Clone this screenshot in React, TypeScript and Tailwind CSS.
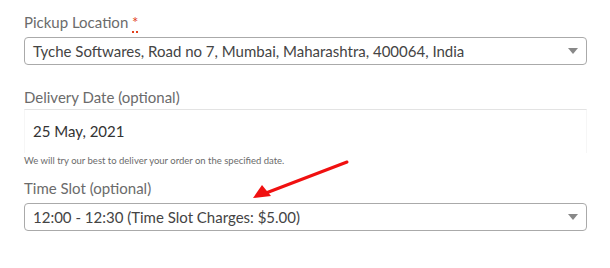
import React from "react";

const Caret = () => (
  <svg width="10" height="6" viewBox="0 0 10 6" className="absolute right-[8px] top-1/2 -translate-y-1/2">
    <path d="M0 0 L10 0 L5 6 Z" fill="#888" />
  </svg>
);

export default function App() {
  return (
    <div
      className="relative w-[610px] h-[268px] bg-white"
      style={{ fontFamily: "Lato, 'Liberation Sans', sans-serif" }}
    >
      <div className="flex flex-col pl-[24px] pt-[10px] w-[587px]">
        <label className="text-[15px] leading-[24px] text-[#6b6b6b]">
          Pickup Location{" "}
          <abbr className="text-[#e2401c] no-underline border-b-2 border-dotted border-[#e2401c]" title="required">*</abbr>
        </label>
        <div className="relative mt-[3px] h-[28px] border border-[#aaaaaa] rounded-[4px] flex items-center pl-[8px] text-[15px] text-[#444]">
          Tyche Softwares, Road no 7, Mumbai, Maharashtra, 400064, India
          <Caret />
        </div>

        <label className="mt-[20px] text-[15px] leading-[24px] text-[#6b6b6b]">Delivery Date (optional)</label>
        <div className="h-[44px] border-t border-[#e3e3e3] border-x border-x-[#f6f6f6] flex items-center pl-[8px] text-[15px] text-[#333]">
          25 May, 2021
        </div>
        <p className="mt-[2px] text-[9.5px] leading-[12px] text-[#6b6b6b]">
          We will try our best to deliver your order on the specified date.
        </p>

        <label className="mt-[9px] text-[15px] leading-[24px] text-[#6b6b6b]">Time Slot (optional)</label>
        <div className="relative mt-[3px] h-[28px] border border-[#aaaaaa] rounded-[4px] flex items-center pl-[8px] text-[15px] text-[#444]">
          12:00 - 12:30 (Time Slot Charges: $5.00)
          <Caret />
        </div>
      </div>

      <svg className="absolute left-0 top-0 pointer-events-none" width="610" height="268">
        <line x1="347" y1="162" x2="266" y2="193" stroke="#f01010" strokeWidth="3" strokeLinecap="round" />
        <path d="M253 198 L262 185 L271 196 Z" fill="#f01010" />
      </svg>
    </div>
  );
}
